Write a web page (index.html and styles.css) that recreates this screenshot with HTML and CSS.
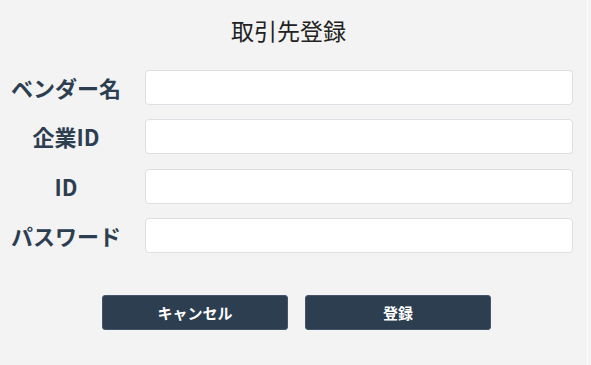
FILE: index.html
```html
<!DOCTYPE html>
<html lang="ja">
<head>
<meta charset="utf-8">
<title>取引先登録</title>
<link rel="stylesheet" href="styles.css">
</head>
<body>
<div class="page">
  <h1 class="title">取引先登録</h1>
  <form class="form">
    <div class="row">
      <label class="label" for="vendor">ベンダー名</label>
      <input class="input" id="vendor" type="text">
    </div>
    <div class="row">
      <label class="label" for="company">企業ID</label>
      <input class="input" id="company" type="text">
    </div>
    <div class="row">
      <label class="label" for="uid">ID</label>
      <input class="input" id="uid" type="text">
    </div>
    <div class="row">
      <label class="label" for="pw">パスワード</label>
      <input class="input" id="pw" type="password">
    </div>
    <div class="actions">
      <button type="button" class="btn">キャンセル</button>
      <button type="button" class="btn">登録</button>
    </div>
  </form>
</div>
</body>
</html>
```
FILE: styles.css
```css
html, body {
  margin: 0;
  padding: 0;
  background: #f3f3f3;
}
body {
  font-family: "Noto Sans CJK JP", "Noto Sans", sans-serif;
  width: 591px;
  height: 365px;
  overflow: hidden;
}
.page {
  width: 587px;
  height: 365px;
  border-right: 1px solid #fbfbfb;
  box-sizing: content-box;
}
.title {
  margin: 0;
  padding-top: 12px;
  height: 36px;
  line-height: 36px;
  font-size: 23px;
  font-weight: 400;
  color: #222;
  text-align: center;
  padding-right: 10px;
}
.form {
  margin: 22px 0 0 0;
  display: flex;
  flex-direction: column;
  gap: 14.33px;
}
.row {
  display: flex;
  align-items: center;
  gap: 13px;
  padding-right: 14px;
}
.label {
  width: 132px;
  flex: none;
  text-align: center;
  font-size: 22px;
  font-weight: 700;
  color: #2c3e50;
  line-height: 35px;
}
.input {
  flex: 1;
  height: 35px;
  box-sizing: border-box;
  margin: 0;
  border: 1px solid #dcdfe3;
  border-radius: 4px;
  background: #fff;
  outline: none;
}
.actions {
  display: flex;
  justify-content: center;
  gap: 17px;
  margin-top: 27.7px;
  width: 591px;
  padding-left: 2px;
  box-sizing: border-box;
}
.btn {
  width: 186px;
  height: 35px;
  border: 1px solid #46566a;
  border-radius: 3px;
  background: #2c3e50;
  color: #fff;
  font-family: "Noto Sans CJK JP", "Noto Sans", sans-serif;
  font-size: 15px;
  font-weight: 700;
  padding: 0;
}
```
